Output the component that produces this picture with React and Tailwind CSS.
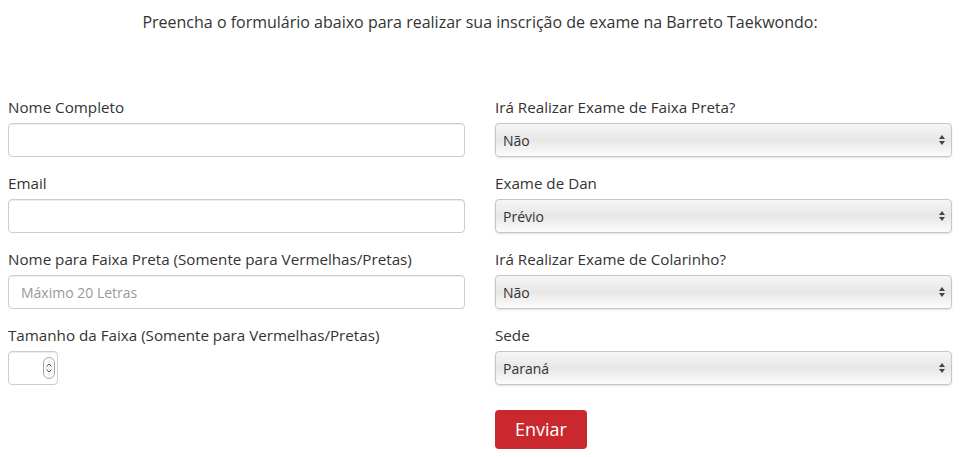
import { useState } from "react";

function Label({ children }) {
  return <label className="block text-[15.2px] leading-5 text-[#333]">{children}</label>;
}

function TextField({ label, placeholder }) {
  return (
    <div className="mb-4 flex flex-col gap-1.5">
      <Label>{label}</Label>
      <input
        type="text"
        placeholder={placeholder}
        className="h-[34px] w-full rounded-[4px] border border-[#cccccc] bg-white px-3 text-[14px] text-[#555] shadow-[inset_0_1px_1px_rgba(0,0,0,0.075)] outline-none placeholder:text-[#999]"
      />
    </div>
  );
}

function SelectField({ label, options }) {
  const [value, setValue] = useState(options[0]);
  return (
    <div className="mb-4 flex flex-col gap-1.5">
      <Label>{label}</Label>
      <div className="relative">
        <select
          value={value}
          onChange={(e) => setValue(e.target.value)}
          className="h-[34px] w-full appearance-none rounded-[4px] border border-[#c6c6c6] bg-gradient-to-b from-[#f6f6f6] via-[#e7e7e7] to-[#fbfbfb] px-[7px] text-[14px] font-medium text-[#333] shadow-[0_1px_2px_rgba(0,0,0,0.12)] outline-none"
        >
          {options.map((o) => (
            <option key={o}>{o}</option>
          ))}
        </select>
        <svg
          className="pointer-events-none absolute right-[6px] top-1/2 -translate-y-1/2"
          width="8"
          height="12"
          viewBox="0 0 8 12"
        >
          <path d="M4 1 L7 5 L1 5 Z" fill="#444" />
          <path d="M4 11 L7 7 L1 7 Z" fill="#444" />
        </svg>
      </div>
    </div>
  );
}

export default function App() {
  return (
    <div className="min-h-[457px] bg-white pl-2 pr-[10px] font-['Open_Sans',sans-serif]">
      <p className="pt-[12px] text-center text-[16px] leading-5 text-[#333]">
        Preencha o formulário abaixo para realizar sua inscrição de exame na Barreto Taekwondo:
      </p>

      <form className="mt-[65px] grid grid-cols-2 gap-x-[30px]" onSubmit={(e) => e.preventDefault()}>
        <div>
          <TextField label="Nome Completo" />
          <TextField label="Email" />
          <TextField label="Nome para Faixa Preta (Somente para Vermelhas/Pretas)" placeholder="Máximo 20 Letras" />
          <div className="flex flex-col gap-1.5">
            <Label>Tamanho da Faixa (Somente para Vermelhas/Pretas)</Label>
            <div className="relative h-[34px] w-[50px] rounded-[4px] border border-[#cccccc] bg-white shadow-[inset_0_1px_1px_rgba(0,0,0,0.075)]">
              <div className="absolute right-[2px] top-1/2 flex h-[22px] w-[12px] -translate-y-1/2 flex-col items-center justify-center rounded-full border border-[#aaa] bg-[#fafafa]">
                <svg width="8" height="14" viewBox="0 0 8 14">
                  <path d="M1.5 5.5 L4 3 L6.5 5.5" stroke="#555" strokeWidth="1" fill="none" />
                  <path d="M1.5 8.5 L4 11 L6.5 8.5" stroke="#555" strokeWidth="1" fill="none" />
                </svg>
              </div>
            </div>
          </div>
        </div>

        <div>
          <SelectField label="Irá Realizar Exame de Faixa Preta?" options={["Não", "Sim"]} />
          <SelectField label="Exame de Dan" options={["Prévio", "1º Dan", "2º Dan", "3º Dan"]} />
          <SelectField label="Irá Realizar Exame de Colarinho?" options={["Não", "Sim"]} />
          <SelectField label="Sede" options={["Paraná", "São Paulo"]} />
          <button
            type="submit"
            className="mt-[9px] h-[39px] w-[92px] rounded-[4px] bg-[#c9282e] text-[18px] font-medium text-white"
          >
            Enviar
          </button>
        </div>
      </form>
    </div>
  );
}
